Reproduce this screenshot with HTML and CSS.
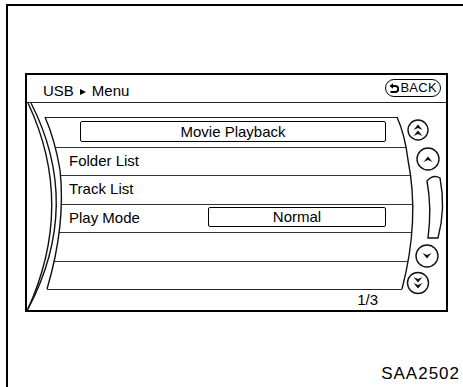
FILE: index.html
```html
<!DOCTYPE html>
<html lang="en">
<head>
    <meta charset="UTF-8">
    <meta name="viewport" content="width=device-width, initial-scale=1.0">
    <title>USB Menu</title>
    <link rel="stylesheet" href="styles.css">
</head>
<body>

<div class="sheet">
    <div class="screen">
        <div class="screen-head">
            <span class="crumb">USB<svg class="crumb-arrow" viewBox="0 0 6 6"><path d="M0,0 L6,3 L0,6 Z"/></svg>Menu</span>
            <span class="back-btn">
                <svg class="back-icon" viewBox="0 0 10 10">
                    <path d="M0.5,3 L4,0.3 L4,5.7 Z" fill="#000"/>
                    <path d="M3,3 H6.2 A3,3 0 0 1 6.2,9 H1.5" fill="none" stroke="#000" stroke-width="1.8"/>
                </svg>BACK
            </span>
        </div>

        <div class="menu-list">
            <div class="menu-row"><div class="menu-title">Movie Playback</div></div>
            <div class="menu-row">Folder List</div>
            <div class="menu-row">Track List</div>
            <div class="menu-row"><span>Play Mode</span><span class="menu-value">Normal</span></div>
            <div class="menu-row"></div>
            <div class="menu-row"></div>
        </div>

        <div class="page-count">1/3</div>

        <!-- bezel outline and scroll keys, drawn over the screen -->
        <svg class="bezel" viewBox="25 73 423 239">
            <g fill="none" stroke="#111" stroke-width="1.4">
                <path d="M28,103 Q76,205 27,311"/>
                <path d="M31,103 Q83,205 28,309"/>
                <path d="M45,117 Q55,140 60,170 Q66,225 47,289"/>
                <path d="M397,117 Q405,135 408,160 Q420,220 402,289"/>
                <circle cx="418" cy="130" r="10"/>
                <circle cx="428" cy="159" r="11"/>
                <circle cx="427" cy="256" r="11"/>
                <circle cx="418" cy="283" r="10.5"/>
                <path d="M427,181 Q433,174 440,178 Q446,208 438,238 L428,238 Q432,208 427,181 Z"/>
            </g>
            <g fill="#111">
                <path transform="translate(418,127)" d="M-4.5,3 L0,-2.5 L4.5,3 L0,1 Z"/>
                <path transform="translate(418,133)" d="M-4.5,3 L0,-2.5 L4.5,3 L0,1 Z"/>
                <path transform="translate(428,159)" d="M-4.5,3 L0,-2.5 L4.5,3 L0,1 Z"/>
                <path transform="translate(427,256) rotate(180)" d="M-4.5,3 L0,-2.5 L4.5,3 L0,1 Z"/>
                <path transform="translate(418,280) rotate(180)" d="M-4.5,3 L0,-2.5 L4.5,3 L0,1 Z"/>
                <path transform="translate(418,286) rotate(180)" d="M-4.5,3 L0,-2.5 L4.5,3 L0,1 Z"/>
            </g>
        </svg>
    </div>

    <div class="fig-code">SAA2502</div>
</div>

</body>
</html>
```

FILE: styles.css
```css
html, body {
    margin: 0;
    overflow: hidden;
    background: #fff;
}
body {
    font-family: "Liberation Sans", Arial, sans-serif;
    color: #000;
}
.sheet {
    margin: 4px 0 0 6px;
    height: 400px;
    border-left: 2px solid #000;
    border-top: 2px solid #000;
}
.screen {
    position: relative;
    width: 423px;
    margin: 67px 0 0 17px;
    box-sizing: border-box;
    border: 2px solid #000;
}
.screen-head {
    height: 27px;
    display: flex;
    align-items: center;
    justify-content: space-between;
    padding: 0 5px 0 16px;
    border-bottom: 1px solid #222;
    font-size: 15px;
}
.crumb {
    padding-top: 3px;
    line-height: 17px;
}
.crumb-arrow {
    width: 6px;
    height: 6px;
    margin: 0 6px 0 6px;
    vertical-align: 1px;
}
.back-btn {
    display: inline-flex;
    align-items: center;
    height: 16px;
    margin-bottom: 2px;
    padding: 0 3px 0 3px;
    border: 1.5px solid #000;
    border-radius: 9px;
    font-size: 13px;
    letter-spacing: 0.3px;
}
.back-icon {
    width: 10px;
    height: 10px;
    margin-right: 1px;
}
.menu-list {
    width: 369px;
    height: 173px;
    margin: 14px 0 0 18px;
    box-sizing: border-box;
    border-top: 1px solid #222;
    border-bottom: 1px solid #222;
    display: grid;
    grid-template-rows: repeat(6, 1fr);
    clip-path: path('M0,0 Q10,23 15,53 Q21,108 2,172 L2,174 L357,174 L357,172 Q375,103 363,43 Q360,18 352,0 Z');
}
.menu-row {
    display: flex;
    align-items: center;
    padding: 0 28px 2px 24px;
    border-top: 1px solid #333;
    font-size: 15px;
}
.menu-row:first-child {
    border-top: none;
}
.menu-title {
    flex: 1;
    margin-left: 11px;
    border: 1px solid #000;
    border-radius: 2px;
    text-align: center;
    line-height: 19px;
}
.menu-value {
    margin-left: auto;
    width: 178px;
    box-sizing: border-box;
    border: 1px solid #000;
    border-radius: 2px;
    text-align: center;
    line-height: 18px;
}
.page-count {
    padding-right: 68px;
    text-align: right;
    font-size: 15px;
    line-height: 20px;
}
.bezel {
    position: absolute;
    left: -2px;
    top: -2px;
    width: 423px;
    height: 239px;
    pointer-events: none;
}
.fig-code {
    margin-top: 52px;
    padding-right: 3px;
    text-align: right;
    font-size: 17px;
    letter-spacing: 1px;
    line-height: 20px;
}
```
